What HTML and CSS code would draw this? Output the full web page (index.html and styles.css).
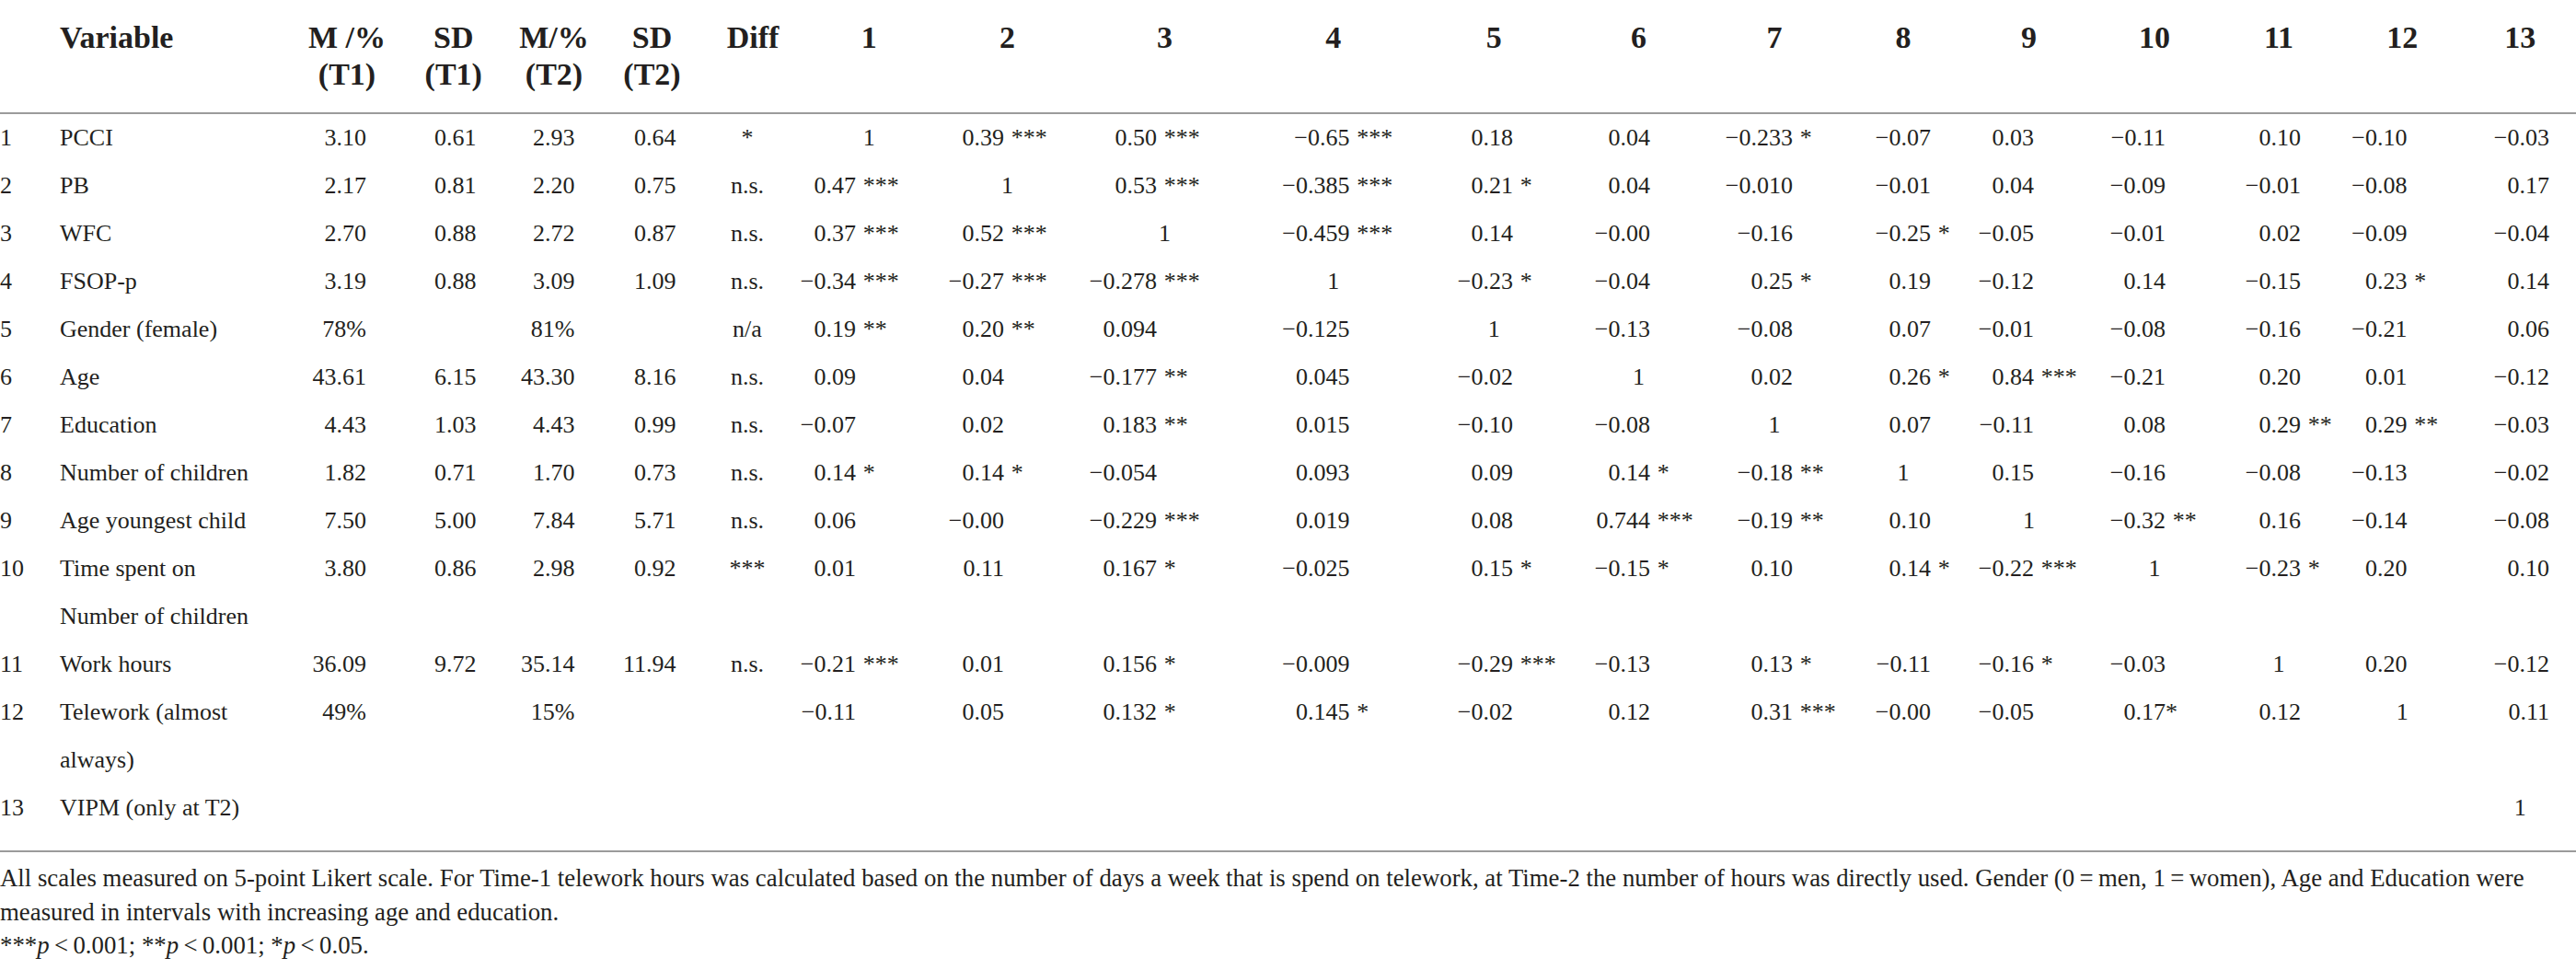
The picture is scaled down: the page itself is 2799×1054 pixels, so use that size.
FILE: index.html
```html
<!DOCTYPE html>
<html>
	<head>
		<meta name="viewport" content="width=device-width, initial-scale=1.0">
		<title>Descriptives and correlations</title>
		<link rel="stylesheet" href="styles.css">
	</head>
	<body>
	<div class="table">
		<div class="head">
			<div></div>
			<div class="hv">Variable</div>
			<div class="hc"><span>M /%<br>(T1)</span></div>
			<div class="hc"><span>SD<br>(T1)</span></div>
			<div class="hc"><span>M/%<br>(T2)</span></div>
			<div class="hc"><span>SD<br>(T2)</span></div>
			<div class="hc"><span>Diff</span></div>
			<div class="hc"><span>1</span></div>
			<div class="hc"><span>2</span></div>
			<div class="hc"><span>3</span></div>
			<div class="hc"><span>4</span></div>
			<div class="hc"><span>5</span></div>
			<div class="hc"><span>6</span></div>
			<div class="hc"><span>7</span></div>
			<div class="hc"><span>8</span></div>
			<div class="hc"><span>9</span></div>
			<div class="hc"><span>10</span></div>
			<div class="hc"><span>11</span></div>
			<div class="hc"><span>12</span></div>
			<div class="hc"><span>13</span></div>
		</div>

		<div class="body">
			<!-- row 1 -->
			<div class="row">
				<div class="no">1</div><div class="var">PCCI</div>
				<div class="c">3.10</div><div class="c">0.61</div><div class="c">2.93</div><div class="c">0.64</div>
				<div class="d">*</div>
				<div class="c one">1</div>
				<div class="c">0.39<span class="st">***</span></div>
				<div class="c">0.50<span class="st">***</span></div>
				<div class="c">&minus;0.65<span class="st">***</span></div>
				<div class="c">0.18</div>
				<div class="c">0.04</div>
				<div class="c">&minus;0.233<span class="st">*</span></div>
				<div class="c">&minus;0.07</div>
				<div class="c">0.03</div>
				<div class="c">&minus;0.11</div>
				<div class="c">0.10</div>
				<div class="c">&minus;0.10</div>
				<div class="c">&minus;0.03</div>
			</div>
			<!-- row 2 -->
			<div class="row">
				<div class="no">2</div><div class="var">PB</div>
				<div class="c">2.17</div><div class="c">0.81</div><div class="c">2.20</div><div class="c">0.75</div>
				<div class="d">n.s.</div>
				<div class="c">0.47<span class="st">***</span></div>
				<div class="c one">1</div>
				<div class="c">0.53<span class="st">***</span></div>
				<div class="c">&minus;0.385<span class="st">***</span></div>
				<div class="c">0.21<span class="st">*</span></div>
				<div class="c">0.04</div>
				<div class="c">&minus;0.010</div>
				<div class="c">&minus;0.01</div>
				<div class="c">0.04</div>
				<div class="c">&minus;0.09</div>
				<div class="c">&minus;0.01</div>
				<div class="c">&minus;0.08</div>
				<div class="c">0.17</div>
			</div>
			<!-- row 3 -->
			<div class="row">
				<div class="no">3</div><div class="var">WFC</div>
				<div class="c">2.70</div><div class="c">0.88</div><div class="c">2.72</div><div class="c">0.87</div>
				<div class="d">n.s.</div>
				<div class="c">0.37<span class="st">***</span></div>
				<div class="c">0.52<span class="st">***</span></div>
				<div class="c one">1</div>
				<div class="c">&minus;0.459<span class="st">***</span></div>
				<div class="c">0.14</div>
				<div class="c">&minus;0.00</div>
				<div class="c">&minus;0.16</div>
				<div class="c">&minus;0.25<span class="st">*</span></div>
				<div class="c">&minus;0.05</div>
				<div class="c">&minus;0.01</div>
				<div class="c">0.02</div>
				<div class="c">&minus;0.09</div>
				<div class="c">&minus;0.04</div>
			</div>
			<!-- row 4 -->
			<div class="row">
				<div class="no">4</div><div class="var">FSOP-p</div>
				<div class="c">3.19</div><div class="c">0.88</div><div class="c">3.09</div><div class="c">1.09</div>
				<div class="d">n.s.</div>
				<div class="c">&minus;0.34<span class="st">***</span></div>
				<div class="c">&minus;0.27<span class="st">***</span></div>
				<div class="c">&minus;0.278<span class="st">***</span></div>
				<div class="c one">1</div>
				<div class="c">&minus;0.23<span class="st">*</span></div>
				<div class="c">&minus;0.04</div>
				<div class="c">0.25<span class="st">*</span></div>
				<div class="c">0.19</div>
				<div class="c">&minus;0.12</div>
				<div class="c">0.14</div>
				<div class="c">&minus;0.15</div>
				<div class="c">0.23<span class="st">*</span></div>
				<div class="c">0.14</div>
			</div>
			<!-- row 5 -->
			<div class="row">
				<div class="no">5</div><div class="var">Gender (female)</div>
				<div class="c">78%</div><div class="c"></div><div class="c">81%</div><div class="c"></div>
				<div class="d">n/a</div>
				<div class="c">0.19<span class="st">**</span></div>
				<div class="c">0.20<span class="st">**</span></div>
				<div class="c">0.094</div>
				<div class="c">&minus;0.125</div>
				<div class="c one">1</div>
				<div class="c">&minus;0.13</div>
				<div class="c">&minus;0.08</div>
				<div class="c">0.07</div>
				<div class="c">&minus;0.01</div>
				<div class="c">&minus;0.08</div>
				<div class="c">&minus;0.16</div>
				<div class="c">&minus;0.21</div>
				<div class="c">0.06</div>
			</div>
			<!-- row 6 -->
			<div class="row">
				<div class="no">6</div><div class="var">Age</div>
				<div class="c">43.61</div><div class="c">6.15</div><div class="c">43.30</div><div class="c">8.16</div>
				<div class="d">n.s.</div>
				<div class="c">0.09</div>
				<div class="c">0.04</div>
				<div class="c">&minus;0.177<span class="st">**</span></div>
				<div class="c">0.045</div>
				<div class="c">&minus;0.02</div>
				<div class="c one">1</div>
				<div class="c">0.02</div>
				<div class="c">0.26<span class="st">*</span></div>
				<div class="c">0.84<span class="st">***</span></div>
				<div class="c">&minus;0.21</div>
				<div class="c">0.20</div>
				<div class="c">0.01</div>
				<div class="c">&minus;0.12</div>
			</div>
			<!-- row 7 -->
			<div class="row">
				<div class="no">7</div><div class="var">Education</div>
				<div class="c">4.43</div><div class="c">1.03</div><div class="c">4.43</div><div class="c">0.99</div>
				<div class="d">n.s.</div>
				<div class="c">&minus;0.07</div>
				<div class="c">0.02</div>
				<div class="c">0.183<span class="st">**</span></div>
				<div class="c">0.015</div>
				<div class="c">&minus;0.10</div>
				<div class="c">&minus;0.08</div>
				<div class="c one">1</div>
				<div class="c">0.07</div>
				<div class="c">&minus;0.11</div>
				<div class="c">0.08</div>
				<div class="c">0.29<span class="st">**</span></div>
				<div class="c">0.29<span class="st">**</span></div>
				<div class="c">&minus;0.03</div>
			</div>
			<!-- row 8 -->
			<div class="row">
				<div class="no">8</div><div class="var">Number of children</div>
				<div class="c">1.82</div><div class="c">0.71</div><div class="c">1.70</div><div class="c">0.73</div>
				<div class="d">n.s.</div>
				<div class="c">0.14<span class="st">*</span></div>
				<div class="c">0.14<span class="st">*</span></div>
				<div class="c">&minus;0.054</div>
				<div class="c">0.093</div>
				<div class="c">0.09</div>
				<div class="c">0.14<span class="st">*</span></div>
				<div class="c">&minus;0.18<span class="st">**</span></div>
				<div class="c one">1</div>
				<div class="c">0.15</div>
				<div class="c">&minus;0.16</div>
				<div class="c">&minus;0.08</div>
				<div class="c">&minus;0.13</div>
				<div class="c">&minus;0.02</div>
			</div>
			<!-- row 9 -->
			<div class="row">
				<div class="no">9</div><div class="var">Age youngest child</div>
				<div class="c">7.50</div><div class="c">5.00</div><div class="c">7.84</div><div class="c">5.71</div>
				<div class="d">n.s.</div>
				<div class="c">0.06</div>
				<div class="c">&minus;0.00</div>
				<div class="c">&minus;0.229<span class="st">***</span></div>
				<div class="c">0.019</div>
				<div class="c">0.08</div>
				<div class="c">0.744<span class="st">***</span></div>
				<div class="c">&minus;0.19<span class="st">**</span></div>
				<div class="c">0.10</div>
				<div class="c one">1</div>
				<div class="c">&minus;0.32<span class="st">**</span></div>
				<div class="c">0.16</div>
				<div class="c">&minus;0.14</div>
				<div class="c">&minus;0.08</div>
			</div>
			<!-- row 10 -->
			<div class="row">
				<div class="no">10</div><div class="var">Time spent on Number of children</div>
				<div class="c">3.80</div><div class="c">0.86</div><div class="c">2.98</div><div class="c">0.92</div>
				<div class="d">***</div>
				<div class="c">0.01</div>
				<div class="c">0.11</div>
				<div class="c">0.167<span class="st">*</span></div>
				<div class="c">&minus;0.025</div>
				<div class="c">0.15<span class="st">*</span></div>
				<div class="c">&minus;0.15<span class="st">*</span></div>
				<div class="c">0.10</div>
				<div class="c">0.14<span class="st">*</span></div>
				<div class="c">&minus;0.22<span class="st">***</span></div>
				<div class="c one">1</div>
				<div class="c">&minus;0.23<span class="st">*</span></div>
				<div class="c">0.20</div>
				<div class="c">0.10</div>
			</div>
			<!-- row 11 -->
			<div class="row">
				<div class="no">11</div><div class="var">Work hours</div>
				<div class="c">36.09</div><div class="c">9.72</div><div class="c">35.14</div><div class="c">11.94</div>
				<div class="d">n.s.</div>
				<div class="c">&minus;0.21<span class="st">***</span></div>
				<div class="c">0.01</div>
				<div class="c">0.156<span class="st">*</span></div>
				<div class="c">&minus;0.009</div>
				<div class="c">&minus;0.29<span class="st">***</span></div>
				<div class="c">&minus;0.13</div>
				<div class="c">0.13<span class="st">*</span></div>
				<div class="c">&minus;0.11</div>
				<div class="c">&minus;0.16<span class="st">*</span></div>
				<div class="c">&minus;0.03</div>
				<div class="c one">1</div>
				<div class="c">0.20</div>
				<div class="c">&minus;0.12</div>
			</div>
			<!-- row 12 -->
			<div class="row">
				<div class="no">12</div><div class="var">Telework (almost always)</div>
				<div class="c">49%</div><div class="c"></div><div class="c">15%</div><div class="c"></div>
				<div class="d"></div>
				<div class="c">&minus;0.11</div>
				<div class="c">0.05</div>
				<div class="c">0.132<span class="st">*</span></div>
				<div class="c">0.145<span class="st">*</span></div>
				<div class="c">&minus;0.02</div>
				<div class="c">0.12</div>
				<div class="c">0.31<span class="st">***</span></div>
				<div class="c">&minus;0.00</div>
				<div class="c">&minus;0.05</div>
				<div class="c">0.17<span class="st tight">*</span></div>
				<div class="c">0.12</div>
				<div class="c one">1</div>
				<div class="c">0.11</div>
			</div>
			<!-- row 13 -->
			<div class="row">
				<div class="no">13</div><div class="var">VIPM (only at T2)</div>
				<div class="c"></div><div class="c"></div><div class="c"></div><div class="c"></div>
				<div class="d"></div>
				<div class="c"></div><div class="c"></div><div class="c"></div><div class="c"></div>
				<div class="c"></div><div class="c"></div><div class="c"></div><div class="c"></div>
				<div class="c"></div><div class="c"></div><div class="c"></div><div class="c"></div>
				<div class="c one">1</div>
			</div>
		</div>

		<div class="notes">
			All scales measured on 5-point Likert scale. For Time-1 telework hours was calculated based on the number of days a week that is spend on telework, at Time-2 the number of hours was directly used. Gender (0&thinsp;=&thinsp;men, 1&thinsp;=&thinsp;women), Age and Education were<br>
			measured in intervals with increasing age and education.<br>
			***<i>p</i>&thinsp;&lt;&thinsp;0.001; **<i>p</i>&thinsp;&lt;&thinsp;0.001; *<i>p</i>&thinsp;&lt;&thinsp;0.05.
		</div>
	</div>
	</body>
</html>
```

FILE: styles.css
```css
	body
	{
		margin: 0;
		background: #ffffff;
		color: #231f20;
		font-family: 'Liberation Serif', 'Times New Roman', serif;
		font-size: 26px;
	}
	.table
	{
		width: 2799px;
	}
	/* same columns for header and rows */
	.head, .row
	{
		display: grid;
		grid-template-columns: 65px 252px 120px 111.5px 107px 106px 113px 139.5px 161px 181px 185.5px 163.5px 151px 144px 136px 137px 136px 134px 134.5px 1fr;
		align-items: start;
	}

	/* header: two lines, bold */
	.head
	{
		padding: 21px 0 21px 0;
		border-bottom: 2px solid #9b9b9b;
		font-weight: bold;
		font-size: 34px;
		line-height: 40px;
	}
	.hv
	{
		white-space: nowrap;
	}
	.hc
	{
		display: flex;
		justify-content: center;
		text-align: center;
		white-space: nowrap;
	}

	/* body rows */
	.body
	{
		padding-bottom: 20px;
		border-bottom: 2px solid #9b9b9b;
	}
	.row
	{
		line-height: 52px;
	}
	.no
	{
		white-space: nowrap;
	}
	.var
	{
		padding-right: 34px;
	}
	.c
	{
		display: flex;
		justify-content: flex-end;
		white-space: nowrap;
	}
	.d
	{
		display: flex;
		justify-content: center;
		padding-right: 12px;
		white-space: nowrap;
	}
	.st
	{
		width: 0;
		text-indent: 0.3em;
		white-space: nowrap;
	}
	.st.tight
	{
		text-indent: 0;
	}

	/* where the numbers end in each column */
	.row > :nth-child(3) { padding-right: 39px; }
	.row > :nth-child(4) { padding-right: 31px; }
	.row > :nth-child(5) { padding-right: 31px; }
	.row > :nth-child(6) { padding-right: 27px; }
	.row > :nth-child(8) { padding-right: 84px; }
	.row > :nth-child(9) { padding-right: 84px; }
	.row > :nth-child(10) { padding-right: 99px; }
	.row > :nth-child(11) { padding-right: 75px; }
	.row > :nth-child(12) { padding-right: 61px; }
	.row > :nth-child(13) { padding-right: 63px; }
	.row > :nth-child(14) { padding-right: 52px; }
	.row > :nth-child(15) { padding-right: 38px; }
	.row > :nth-child(16) { padding-right: 63px; }
	.row > :nth-child(17) { padding-right: 56px; }
	.row > :nth-child(18) { padding-right: 43px; }
	.row > :nth-child(19) { padding-right: 62px; }
	.row > :nth-child(20) { padding-right: 29px; }

	/* the diagonal sits under its column number */
	.row > .one
	{
		justify-content: center;
		padding-right: 0;
	}

	/* footnote */
	.notes
	{
		padding-top: 10px;
		font-size: 26.8px;
		line-height: 36.5px;
		white-space: nowrap;
	}
```
